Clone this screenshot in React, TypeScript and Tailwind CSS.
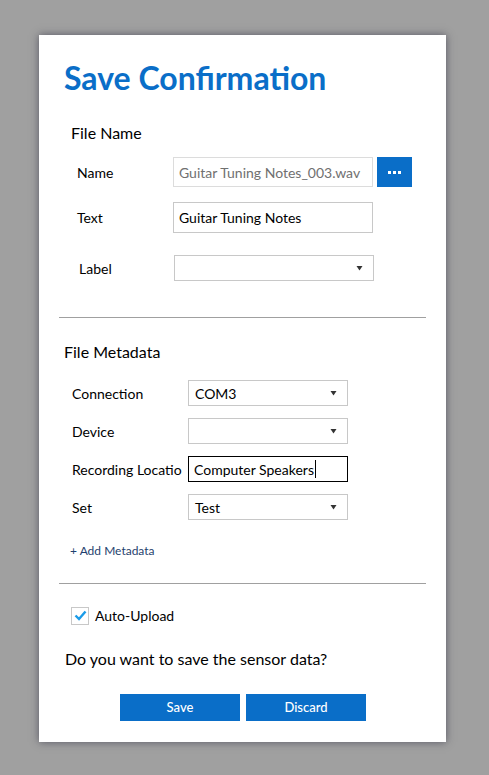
import React from "react";

const font = { fontFamily: '"Lato", "Open Sans", sans-serif' };

function Caret() {
  return (
    <svg width="7" height="5" viewBox="0 0 7 5" className="shrink-0">
      <path d="M0.5 0h6L3.5 4.5z" fill="#333" />
    </svg>
  );
}

function Select({ value, className }: { value?: string; className: string }) {
  return (
    <div
      className={`flex items-center justify-between border border-[#c8c8c8] bg-white pl-[6px] pr-[10px] text-[14px] text-black ${className}`}
    >
      <span>{value ?? ""}</span>
      <Caret />
    </div>
  );
}

export default function App() {
  return (
    <div className="min-h-screen w-full bg-[#a0a0a0] pl-[39px] pt-[35px]" style={font}>
      <div className="flex h-[707px] w-[407px] flex-col bg-white shadow-[0_0_8px_rgba(40,40,60,0.6)]">
        <h1 className="ml-[25px] mt-[23px] text-[32px] font-bold leading-[40px] text-[#0a6ec8]">
          Save Confirmation
        </h1>

        <div className="ml-[32px] mt-[25px] text-[16px] leading-[20px] text-black">File Name</div>

        <div className="mt-[14px] flex items-center">
          <span className="w-[134px] pl-[38px] text-[14px] text-black">Name</span>
          <div className="flex h-[30px] w-[200px] items-center border border-[#dcdcdc] px-[5px] text-[14px] text-[#707070]">
            Guitar Tuning Notes_003.wav
          </div>
          <button className="ml-[4px] flex h-[30px] w-[35px] items-center justify-center bg-[#0a6ec8]">
            <span className="flex gap-[2px]">
              <span className="h-[3px] w-[3px] bg-white" />
              <span className="h-[3px] w-[3px] bg-white" />
              <span className="h-[3px] w-[3px] bg-white" />
            </span>
          </button>
        </div>

        <div className="mt-[15px] flex items-center">
          <span className="w-[134px] pl-[38px] text-[14px] text-black">Text</span>
          <div className="flex h-[31px] w-[200px] items-center border border-[#c8c8c8] px-[5px] text-[14px] text-black">
            Guitar Tuning Notes
          </div>
        </div>

        <div className="mt-[22px] flex items-center">
          <span className="w-[135px] pl-[40px] text-[14px] text-black">Label</span>
          <Select className="h-[26px] w-[200px]" />
        </div>

        <div className="ml-[20px] mr-[20px] mt-[36px] h-px bg-[#a0a0a0]" />

        <div className="ml-[25px] mt-[24px] text-[16px] leading-[20px] text-black">File Metadata</div>

        <div className="ml-[33px] mt-[18px] flex flex-col gap-[12px] text-[14px] text-black">
          <div className="flex items-center">
            <span className="w-[116px]">Connection</span>
            <Select value="COM3" className="h-[26px] w-[160px]" />
          </div>
          <div className="flex items-center">
            <span className="w-[116px]">Device</span>
            <Select className="h-[26px] w-[160px]" />
          </div>
          <div className="flex items-center">
            <span className="w-[110px] overflow-hidden whitespace-nowrap">Recording Location</span>
            <div className="ml-[6px] flex h-[26px] w-[160px] items-center border border-black px-[5px]">
              Computer Speakers<span className="ml-px h-[18px] w-px bg-black" />
            </div>
          </div>
          <div className="flex items-center">
            <span className="w-[116px]">Set</span>
            <Select value="Test" className="h-[26px] w-[160px]" />
          </div>
        </div>

        <div className="ml-[31px] mt-[22px] text-[12px] text-[#1f3f6e]">+ Add Metadata</div>

        <div className="ml-[20px] mr-[20px] mt-[23px] h-px bg-[#a0a0a0]" />

        <div className="ml-[32px] mt-[21px] flex items-center gap-[6px]">
          <div className="flex h-[18px] w-[18px] items-center justify-center border border-[#c8c8c8]">
            <svg width="13" height="11" viewBox="0 0 13 11">
              <path d="M1.5 5.5l3.5 3.5 6.5-7.5" fill="none" stroke="#1a9be8" strokeWidth="2.4" />
            </svg>
          </div>
          <span className="text-[14px] text-black">Auto-Upload</span>
        </div>

        <div className="ml-[26px] mt-[21px] text-[16px] text-black">Do you want to save the sensor data?</div>

        <div className="mt-[23px] flex justify-center gap-[6px] pl-[1px]">
          <button className="h-[27px] w-[120px] bg-[#0a6ec8] text-[13px] font-medium text-white">Save</button>
          <button className="h-[27px] w-[120px] bg-[#0a6ec8] text-[13px] font-medium text-white">Discard</button>
        </div>
      </div>
    </div>
  );
}
